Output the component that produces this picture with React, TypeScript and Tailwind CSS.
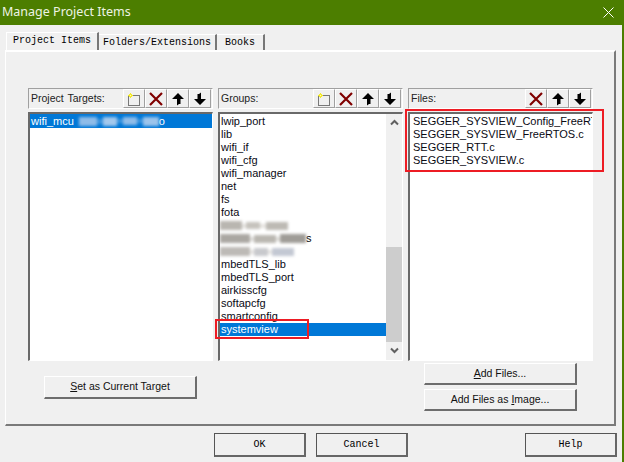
import React from 'react';

const listFont = { fontFamily: '"Liberation Sans", Arial, sans-serif' };
const dlgFont = { fontFamily: '"Liberation Mono", monospace' };

const NewIcon = () => (
  <svg width="16" height="16" viewBox="0 0 16 16">
    <rect x="2.5" y="4.5" width="11" height="10" fill="none" stroke="#000" strokeDasharray="1 1" />
    <path d="M4.5 2v5M2 4.5h5M3 3l3 3M6 3L3 6" stroke="#f4ea2a" strokeWidth="1" />
    <rect x="4" y="4" width="1" height="1" fill="#fffbc0" />
  </svg>
);

const DeleteIcon = () => (
  <svg width="16" height="16" viewBox="0 0 16 16">
    <path d="M2 2l12 12M14 2L2 14" stroke="#800000" strokeWidth="2.2" />
  </svg>
);

const UpIcon = () => (
  <svg width="14" height="14" viewBox="0 0 14 14">
    <path d="M7 1L13 7H9.5V12H8L6 13.5V7H1z" fill="#000" />
  </svg>
);

const DownIcon = () => (
  <svg width="14" height="14" viewBox="0 0 14 14">
    <path d="M7 13L1 7H4.5V2H6L8 0.5V7H13z" fill="#000" />
  </svg>
);

const ToolButton = ({ children }: { children: React.ReactNode }) => (
  <div className="flex h-[19px] w-[22px] items-center justify-center border-t border-l border-r border-b border-t-white border-l-white border-r-[#a0a0a0] border-b-[#a0a0a0] bg-[#f0f0f0]">
    {children}
  </div>
);

const Chevron = ({ up }: { up?: boolean }) => (
  <svg width="9" height="7" viewBox="0 0 9 7">
    <path d={up ? 'M1 5.5l3.5-3.5 3.5 3.5' : 'M1 1.5l3.5 3.5 3.5-3.5'} fill="none" stroke="#606060" strokeWidth="2" />
  </svg>
);

// smudged-out text, a run of soft patches
const Smudge = ({ patches }: { patches: string[] }) => (
  <span className="flex h-[11px] items-center blur-[1.5px]">
    {patches.map((p, i) => (
      <span key={i} className={p} />
    ))}
  </span>
);

const Row = ({ children, selected }: { children: React.ReactNode; selected?: boolean }) => (
  <div className={`h-[13px] pl-[1px] text-[11px] leading-[13px] whitespace-nowrap ${selected ? 'bg-[#0078d7] text-white' : 'text-[#0a0a14]'}`}>
    {children}
  </div>
);

const Column = ({
  title,
  tools,
  children,
}: {
  title: string;
  tools: React.ReactNode;
  children: React.ReactNode;
}) => (
  <div className="flex w-[185px] flex-col">
    <div className="flex h-[21px] items-center justify-between border-t border-l border-r border-b border-t-[#a0a0a0] border-l-[#a0a0a0] border-r-white border-b-white pl-[2px] pr-[1px]">
      <span className="text-[10.5px] text-[#222] [word-spacing:1px]">{title}</span>
      <div className="flex">{tools}</div>
    </div>
    <div className="mt-[3px] h-[249px] overflow-hidden border-t-2 border-l-2 border-r border-b border-t-[#696969] border-l-[#696969] border-r-white border-b-white bg-white">
      {children}
    </div>
  </div>
);

const DlgButton = ({ className, children }: { className: string; children: React.ReactNode }) => (
  <div
    className={`flex items-center justify-center border-t border-l border-r-2 border-b-2 border-t-white border-l-white border-r-[#6d6d6d] border-b-[#6d6d6d] bg-[#f0f0f0] text-[10.5px] text-[#111] ${className}`}
  >
    {children}
  </div>
);

const FootButton = ({ children }: { children: React.ReactNode }) => (
  <div
    className="flex h-[24px] w-[92px] items-center justify-center border-t border-l border-r-2 border-b-2 border-t-[#555] border-l-[#555] border-r-[#666] border-b-[#666] bg-[#f0f0f0] text-[10px] text-black"
    style={dlgFont}
  >
    {children}
  </div>
);

const groups = ['lwip_port', 'lib', 'wifi_if', 'wifi_cfg', 'wifi_manager', 'net', 'fs', 'fota'];
const groups2 = ['mbedTLS_lib', 'mbedTLS_port', 'airkisscfg', 'softapcfg', 'smartconfig'];
const files = ['SEGGER_SYSVIEW_Config_FreeRTOS.c', 'SEGGER_SYSVIEW_FreeRTOS.c', 'SEGGER_RTT.c', 'SEGGER_SYSVIEW.c'];

export default function App() {
  return (
    <div className="relative flex h-[462px] w-[624px] flex-col overflow-hidden bg-[#f0f0f0]" style={listFont}>
      {/* title bar */}
      <div className="flex h-[25px] shrink-0 items-center justify-between bg-[#4c7e00] pl-[2px] pr-[10px]">
        <span className="text-[12.5px] text-[#eef4e4]" style={{ fontFamily: '"Noto Sans", sans-serif' }}>
          Manage Project Items
        </span>
        <svg width="11" height="11" viewBox="0 0 11 11">
          <path d="M0.5 0.5l10 10M10.5 0.5l-10 10" stroke="#fff" strokeWidth="1" />
        </svg>
      </div>

      {/* tabs */}
      <div className="ml-[6px] mt-[7px] flex h-[18px] items-end text-[10px] text-black" style={dlgFont}>
        <div className="flex h-[18px] w-[93px] items-center justify-center border-t border-l border-r-2 border-t-white border-l-white border-r-[#777] pb-[2px]">Project Items</div>
        <div className="flex h-[16px] w-[118px] items-center justify-center border-t border-t-white border-r-2 border-r-[#777]">Folders/Extensions</div>
        <div className="flex h-[16px] w-[48px] items-center justify-center border-t border-t-white border-r-2 border-r-[#777]">Books</div>
      </div>

      {/* tab page */}
      <div className="ml-[5px] flex h-[376px] w-[611px] flex-col border-t-2 border-l border-r-2 border-b-2 border-t-white border-l-white border-r-[#7a7a7a] border-b-[#7a7a7a] pl-[22px] pt-[36px]">
        <div className="flex gap-[5px]">
          <Column
            title="Project Targets:"
            tools={
              <>
                <ToolButton><NewIcon /></ToolButton>
                <ToolButton><DeleteIcon /></ToolButton>
                <ToolButton><UpIcon /></ToolButton>
                <ToolButton><DownIcon /></ToolButton>
              </>
            }
          >
            <div className="flex h-[14px] items-center bg-[#0078d7] pl-[1px] text-[11px] whitespace-nowrap text-white">
              <span className="mr-[5px]">wifi_mcu</span>
              <Smudge
                patches={[
                  'h-[9px] w-[18px] bg-[#8fbce8]',
                  'h-[5px] w-[6px] bg-[#3f95dd]',
                  'h-[9px] w-[14px] bg-[#a3c8ec]',
                  'h-[4px] w-[6px] bg-[#3f95dd]',
                  'h-[8px] w-[14px] bg-[#8fbce8]',
                  'h-[4px] w-[6px] bg-[#3f95dd]',
                  'h-[9px] w-[16px] bg-[#9cc4eb]',
                ]}
              />
              <span>o</span>
            </div>
          </Column>
          <Column
            title="Groups:"
            tools={
              <>
                <ToolButton><NewIcon /></ToolButton>
                <ToolButton><DeleteIcon /></ToolButton>
                <ToolButton><UpIcon /></ToolButton>
                <ToolButton><DownIcon /></ToolButton>
              </>
            }
          >
            <div className="flex h-full">
              <div className="min-w-0 flex-1 pt-[1px]">
                {groups.map((g) => (
                  <Row key={g}>{g}</Row>
                ))}
                <div className="flex h-[39px] flex-col justify-center gap-[2px]">
                  <Smudge
                    patches={[
                      'h-[9px] w-[22px] bg-[#b9b6b0]',
                      'h-[4px] w-[4px] bg-[#e6e4e0]',
                      'h-[7px] w-[14px] bg-[#c6c3bd]',
                      'h-[4px] w-[6px] bg-[#e6e4e0]',
                      'h-[8px] w-[22px] bg-[#bdbab4]',
                    ]}
                  />
                  <div className="flex items-center text-[11px] leading-[11px]">
                    <Smudge
                      patches={[
                        'h-[9px] w-[30px] bg-[#aaa7a2]',
                        'h-[4px] w-[4px] bg-[#e0dedb]',
                        'h-[8px] w-[22px] bg-[#bab7b1]',
                        'h-[4px] w-[4px] bg-[#e0dedb]',
                        'h-[9px] w-[26px] bg-[#9f9c97]',
                      ]}
                    />
                    <span>s</span>
                  </div>
                  <Smudge
                    patches={[
                      'h-[9px] w-[30px] bg-[#bdbab6]',
                      'h-[4px] w-[4px] bg-[#e8e6e3]',
                      'h-[8px] w-[14px] bg-[#c8c9cd]',
                      'h-[4px] w-[4px] bg-[#e8e6e3]',
                      'h-[8px] w-[22px] bg-[#c3c8d3]',
                    ]}
                  />
                </div>
                {groups2.map((g) => (
                  <Row key={g}>{g}</Row>
                ))}
                <Row selected>systemview</Row>
              </div>
              <div className="flex w-[16px] flex-col items-center bg-[#f0f0f0]">
                <div className="flex h-[17px] items-center"><Chevron up /></div>
                <div className="mt-[116px] h-[95px] w-full bg-[#cdcdcd]" />
                <div className="flex h-[17px] items-center"><Chevron /></div>
              </div>
            </div>
          </Column>
          <Column
            title="Files:"
            tools={
              <>
                <ToolButton><DeleteIcon /></ToolButton>
                <ToolButton><UpIcon /></ToolButton>
                <ToolButton><DownIcon /></ToolButton>
              </>
            }
          >
            <div className="pl-[2px] pt-[1px]">
              {files.map((f) => (
                <Row key={f}>{f}</Row>
              ))}
            </div>
          </Column>
        </div>

        <div className="flex">
          <DlgButton className="ml-[16px] mt-[15px] h-[23px] w-[153px]">
            <span><u>S</u>et as Current Target</span>
          </DlgButton>
          <div className="ml-[227px] mt-[2px] flex flex-col gap-[4px]">
            <DlgButton className="h-[22px] w-[153px]">
              <span><u>A</u>dd Files...</span>
            </DlgButton>
            <DlgButton className="h-[22px] w-[153px]">
              <span>Add Files as <u>I</u>mage...</span>
            </DlgButton>
          </div>
        </div>
      </div>

      {/* footer */}
      <div className="ml-[214px] mt-[7px] flex">
        <FootButton>OK</FootButton>
        <div className="ml-[10px]"><FootButton>Cancel</FootButton></div>
        <div className="ml-[117px]"><FootButton>Help</FootButton></div>
      </div>

      {/* annotation boxes */}
      <div className="absolute left-[215px] top-[319px] h-[20px] w-[94px] border-2 border-[#ed1c24]" />
      <div className="absolute left-[405px] top-[109px] h-[63px] w-[199px] border-2 border-[#ed1c24]" />
      <div className="absolute right-0 top-[25px] h-[437px] w-[2px] bg-[#4c7e00]" />
    </div>
  );
}
